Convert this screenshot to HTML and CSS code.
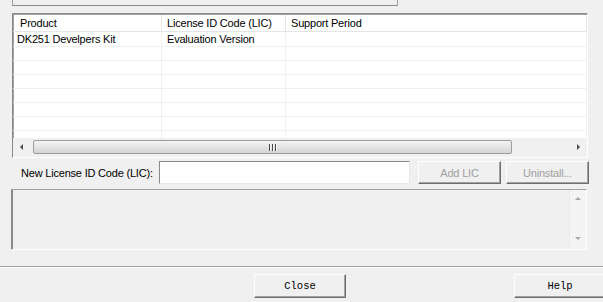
FILE: index.html
```html
<!DOCTYPE html>
<html lang="en">
<head>
    <meta charset="UTF-8">
    <title>License Management</title>
    <link rel="stylesheet" href="styles.css">
</head>
<body>
    <div class="dialog">
        <div class="topbox"></div>

        <div class="listview">
            <div class="lv-head">
                <div class="col col-first">Product</div>
                <div class="col">License ID Code (LIC)</div>
                <div class="col">Support Period</div>
            </div>
            <div class="lv-body">
                <div class="lv-row first"><div class="cell cell-first">DK251 Develpers Kit</div><div class="cell">Evaluation Version</div><div class="cell"></div></div>
                <div class="lv-row"><div class="cell"></div><div class="cell"></div><div class="cell"></div></div>
                <div class="lv-row"><div class="cell"></div><div class="cell"></div><div class="cell"></div></div>
                <div class="lv-row"><div class="cell"></div><div class="cell"></div><div class="cell"></div></div>
                <div class="lv-row"><div class="cell"></div><div class="cell"></div><div class="cell"></div></div>
                <div class="lv-row"><div class="cell"></div><div class="cell"></div><div class="cell"></div></div>
                <div class="lv-row"><div class="cell"></div><div class="cell"></div><div class="cell"></div></div>
                <div class="lv-row"><div class="cell"></div><div class="cell"></div><div class="cell"></div></div>
            </div>
            <div class="hscroll">
                <span class="sb-btn"><i class="arrow arrow-left"></i></span>
                <div class="sb-track"><div class="sb-thumb"><i class="grip"></i></div></div>
                <span class="sb-btn"><i class="arrow arrow-right"></i></span>
            </div>
        </div>

        <div class="lic-row">
            <label class="lic-label" for="licInput">New License ID Code (LIC):</label>
            <input type="text" id="licInput" class="lic-input">
            <button class="btn btn-add" disabled>Add LIC</button>
            <button class="btn btn-uninstall" disabled>Uninstall...</button>
        </div>

        <div class="log">
            <div class="log-text"></div>
            <div class="vscroll">
                <i class="arrow arrow-up"></i>
                <i class="arrow arrow-down"></i>
            </div>
        </div>

        <div class="separator"></div>

        <div class="footer">
            <button class="btn btn-mono">Close</button>
            <button class="btn btn-mono">Help</button>
        </div>
    </div>
</body>
</html>
```

FILE: styles.css
```css
body {
    margin: 0;
    background: #f0f0f0;
    font-family: "Liberation Sans", Arial, sans-serif;
    font-size: 11px;
    letter-spacing: -0.2px;
    color: #000;
}
.dialog {
    width: 603px;
    height: 302px;
    overflow: hidden;
}
.topbox {
    margin-left: 12px;
    width: 386px;
    height: 6px;
    box-sizing: border-box;
    border: 1px solid #a0a0a0;
    border-top: none;
    border-bottom-color: #8c8c8c;
}

/* list view */
.listview {
    margin: 7px 0 0 12px;
    width: 576px;
    height: 145px;
    box-sizing: border-box;
    background: #fff;
    border: 1px solid;
    border-color: #8a8a8a #fff #fff #8a8a8a;
    box-shadow: inset 1px 0 0 #a0a0a0;
}
.lv-head, .lv-row {
    display: grid;
    grid-template-columns: 149px 124px 1fr;
}
.lv-head {
    height: 18px;
    box-sizing: border-box;
    border-top: 1px solid #a0a0a0;
    border-bottom: 1px solid #e5e5e5;
}
.col {
    border-right: 1px solid #e5e5e5;
    padding-left: 5px;
    line-height: 16px;
}
.col-first {
    padding-left: 7px;
}
.lv-body {
    height: 106px;
    overflow: hidden;
}
.lv-row {
    height: 14px;
    box-sizing: border-box;
    border-bottom: 1px solid #f0f0f0;
}
.lv-row.first {
    height: 15px;
}
.cell {
    border-right: 1px solid #f0f0f0;
    padding-left: 5px;
    line-height: 15px;
    white-space: nowrap;
}
.cell-first {
    padding-left: 4px;
}

/* scrollbars */
.hscroll {
    display: flex;
    height: 19px;
    background: #f0f0f0;
    padding-right: 1px;
}
.sb-btn {
    width: 17px;
    height: 17px;
    display: flex;
    align-items: center;
    justify-content: center;
}
.sb-track {
    flex: 1;
    padding: 2px 3px 0;
}
.sb-thumb {
    width: 477px;
    height: 12px;
    border: 1px solid #9c9c9c;
    border-radius: 2px;
    background: linear-gradient(#f3f3f3, #e4e4e4 50%, #d4d4d4);
    display: flex;
    align-items: center;
    justify-content: center;
}
.grip {
    width: 8px;
    height: 7px;
    background: repeating-linear-gradient(90deg, #4a4a4a 0 1px, #fafafa 1px 2px, transparent 2px 3px);
}
.arrow {
    width: 0;
    height: 0;
    border: 3px solid transparent;
}
.arrow-left {
    border-left-width: 0;
    border-right: 3px solid #4a4a4a;
    margin-right: 1px;
}
.arrow-right {
    border-right-width: 0;
    border-left: 3px solid #4a4a4a;
    margin-left: 2px;
}
.arrow-up {
    border-top-width: 0;
    border-bottom: 3px solid #a6a6a6;
}
.arrow-down {
    border-bottom-width: 0;
    border-top: 3px solid #a6a6a6;
}

/* license entry */
.lic-row {
    display: flex;
    align-items: center;
    margin-top: 3px;
    height: 23px;
}
.lic-label {
    width: 138px;
    margin-left: 21px;
    white-space: nowrap;
}
.lic-input {
    width: 251px;
    height: 23px;
    margin: 0;
    box-sizing: border-box;
    background: #fff;
    border: 1px solid;
    border-color: #8a8a8a #e8e8e8 #e8e8e8 #8a8a8a;
    outline: none;
}
.btn {
    width: 83px;
    height: 23px;
    margin: 0;
    padding: 0;
    box-sizing: border-box;
    background: #f0f0f0;
    border: 1px solid;
    border-color: #fff #6e6e6e #6e6e6e #fff;
    box-shadow: inset -1px -1px 0 #a0a0a0;
    font-family: "Liberation Sans", Arial, sans-serif;
    font-size: 11px;
    letter-spacing: -0.2px;
    color: #000;
}
.btn:disabled {
    color: #a0a0a0;
}
.btn-add {
    margin-left: 8px;
}
.btn-uninstall {
    margin-left: 5px;
}

/* log box */
.log {
    display: flex;
    margin: 5px 0 0 11px;
    width: 576px;
    height: 61px;
    box-sizing: border-box;
    border: 1px solid;
    border-color: #a0a0a0 #fff #fff #8a8a8a;
    box-shadow: inset 1px 0 0 #8a8a8a;
}
.log-text {
    flex: 1;
}
.vscroll {
    width: 16px;
    background: #f4f4f4;
    border-left: 1px solid #e8e8e8;
    display: flex;
    flex-direction: column;
    align-items: center;
    justify-content: space-between;
    padding: 7px 0 9px;
}

.separator {
    margin-top: 16px;
    height: 0;
    border-top: 1px solid #a0a0a0;
    border-bottom: 1px solid #fff;
}

.footer {
    display: flex;
    gap: 168px;
    margin-top: 6px;
    padding-left: 254px;
}
.btn-mono {
    flex: none;
    width: 92px;
    height: 24px;
    font-family: "Liberation Mono", "Courier New", monospace;
    font-size: 10.5px;
    letter-spacing: 0;
}
```
